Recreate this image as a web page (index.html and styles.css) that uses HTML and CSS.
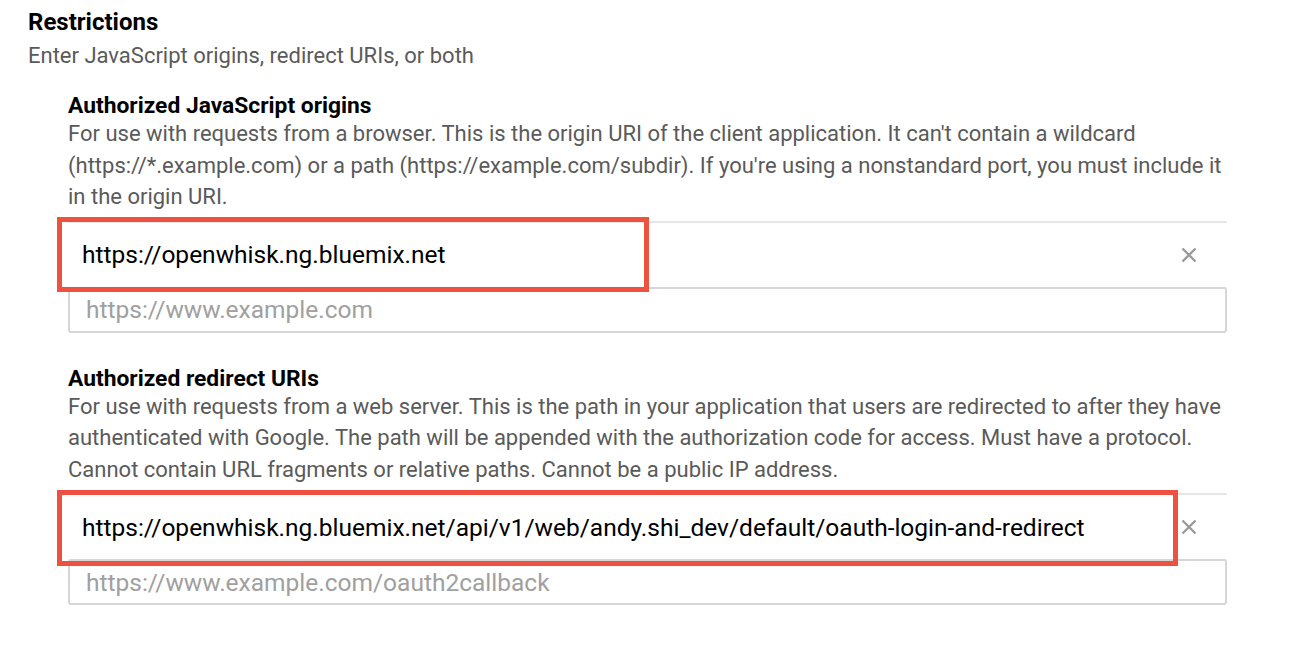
FILE: index.html
```html
<!DOCTYPE html>
<html>
<head>
<meta charset="utf-8">
<link rel="stylesheet" href="styles.css">
</head>
<body>
<div class="page">
  <h2 class="title">Restrictions</h2>
  <p class="sub">Enter JavaScript origins, redirect URIs, or both</p>

  <div class="section">
    <h3 class="heading">Authorized JavaScript origins</h3>
    <p class="desc">For use with requests from a browser. This is the origin URI of the client application. It can't contain a wildcard (https://*.example.com) or a path (https://example.com/subdir). If you're using a nonstandard port, you must include it in the origin URI.</p>
    <div class="list">
      <div class="row">
        <span class="value">https://openwhisk.ng.bluemix.net</span>
        <span class="remove"><svg width="16" height="16" viewBox="0 0 16 16"><path d="M1.5 1.5 L14.5 14.5 M14.5 1.5 L1.5 14.5" stroke="#9a9a9a" stroke-width="2.4" fill="none"/></svg></span>
        <span class="mark mark-one"></span>
      </div>
      <div class="input"><span class="placeholder">https://www.example.com</span></div>
    </div>
  </div>

  <div class="section section-second">
    <h3 class="heading">Authorized redirect URIs</h3>
    <p class="desc">For use with requests from a web server. This is the path in your application that users are redirected to after they have authenticated with Google. The path will be appended with the authorization code for access. Must have a protocol. Cannot contain URL fragments or relative paths. Cannot be a public IP address.</p>
    <div class="list">
      <div class="row">
        <span class="value">https://openwhisk.ng.bluemix.net/api/v1/web/andy.shi_dev/default/oauth-login-and-redirect</span>
        <span class="remove"><svg width="16" height="16" viewBox="0 0 16 16"><path d="M1.5 1.5 L14.5 14.5 M14.5 1.5 L1.5 14.5" stroke="#9a9a9a" stroke-width="2.4" fill="none"/></svg></span>
        <span class="mark mark-two"></span>
      </div>
      <div class="input"><span class="placeholder">https://www.example.com/oauth2callback</span></div>
    </div>
  </div>
</div>
</body>
</html>
```
FILE: styles.css
```css
html, body {
  margin: 0;
  padding: 0;
  background: #ffffff;
}
body {
  font-family: Roboto, "Liberation Sans", Arial, sans-serif;
  color: #212121;
}
.page {
  padding: 8px 0 0 28px;
}
.title {
  margin: 0;
  font-size: 24px;
  font-weight: 700;
  line-height: 28px;
  color: #000000;
}
.sub {
  margin: 4px 0 0;
  font-size: 22px;
  line-height: 32px;
  color: #5a5a5a;
}
.section {
  margin: 22px 0 0 40px;
  width: 1159px;
}
.section-second {
  margin-top: 34px;
}
.heading {
  margin: 0;
  font-size: 22.8px;
  font-weight: 700;
  line-height: 24px;
  color: #000000;
}
.desc {
  margin: 0;
  font-size: 22px;
  line-height: 31.5px;
  color: #5a5a5a;
}
.list {
  margin-top: 8px;
  border-top: 2px solid #e6e6e6;
}
.row {
  position: relative;
  height: 64px;
  display: flex;
  align-items: center;
  justify-content: space-between;
  padding: 0 30px 0 14px;
}
.value {
  font-size: 24.5px;
  color: #000000;
}
.remove {
  display: flex;
  width: 16px;
  height: 16px;
}
.mark {
  position: absolute;
  border: 5px solid #ef5140;
  box-sizing: border-box;
  top: -6px;
  left: -11px;
}
.mark-one {
  width: 592px;
  height: 75px;
}
.mark-two {
  width: 1121px;
  height: 76px;
  top: -5px;
}
.input {
  height: 46px;
  box-sizing: border-box;
  border: 2px solid #d6d6d6;
  border-radius: 3px;
  display: flex;
  align-items: center;
  padding-left: 16px;
}
.placeholder {
  font-size: 24.5px;
  color: #a0a0a0;
}
```
